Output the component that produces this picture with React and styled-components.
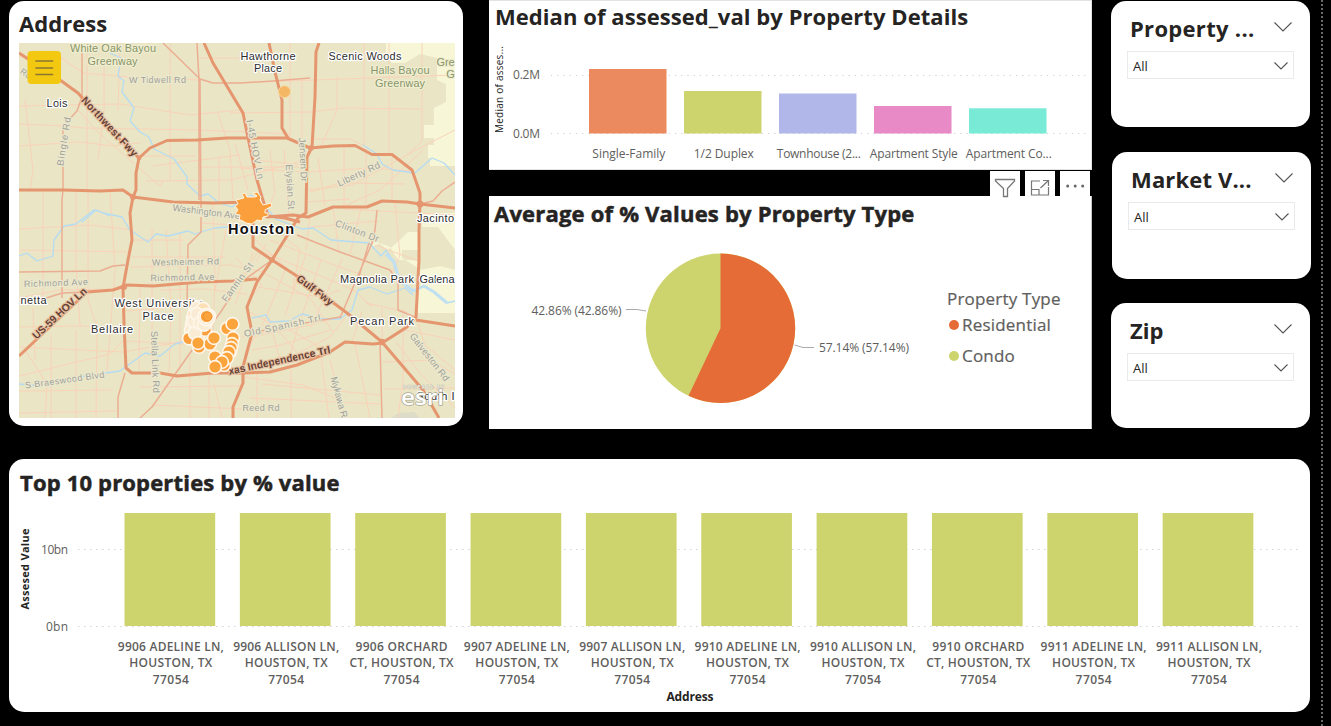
import React from "react";
import styled, { createGlobalStyle } from "styled-components";

const Global = createGlobalStyle`
  * { box-sizing: border-box; }
  body { margin: 0; background: #000; overflow: hidden; }
  svg { display: block; }
`;

const UI = '"Open Sans", "Noto Sans", sans-serif';

const Page = styled.div`
  display: flex;
  width: 1331px;
  height: 726px;
  background: #000;
  font-family: ${UI};
  color: #252423;
  overflow: hidden;
`;
const Report = styled.main`
  width: 1321px;
  flex: none;
  padding: 0 0 0 9px;
`;
const PageEdge = styled.div`
  width: 2px;
  background: repeating-linear-gradient(#6a6a6a 0 2px, #000 2px 4px);
`;
const TopRow = styled.div`
  display: flex;
  align-items: flex-start;
  height: 459px;
`;
const Card = styled.section`
  background: #fff;
  border-radius: 15px;
  overflow: hidden;
`;
const MapCard = styled(Card)`
  width: 454px;
  height: 425px;
  margin-top: 1px;
  padding: 7px 8px 8px 10px;
`;
const Title = styled.h2`
  margin: 0;
  font-size: 22px;
  line-height: 30px;
  height: ${(p) => p.$height || 32}px;
  font-weight: 700;
  white-space: nowrap;
  letter-spacing: ${(p) => p.$tracking || 0}px;
  -webkit-text-stroke: ${(p) => (p.$heavy ? "0.5px #252423" : "0")};
`;
const Middle = styled.div`
  width: 603px;
  margin-left: 26px;
`;
const Panel = styled.section`
  background: #fff;
  border-right: 1px solid #c8c8c8;
  height: ${(p) => p.$height}px;
  padding: ${(p) => p.$pad};
`;
const BarPanel = styled(Panel)`
  border: 1px solid #e3e3e3;
  border-left: 0;
`;
const Toolbar = styled.div`
  display: flex;
  justify-content: flex-end;
  gap: 5px;
  height: 26px;
  padding: 1px 2px 0 0;
`;
const ToolButton = styled.button`
  width: 30px;
  height: 27px;
  padding: 0;
  border: 0;
  background: #fff;
  position: relative;
`;
const PieBody = styled.div`
  display: flex;
`;
const Legend = styled.div`
  padding-top: 56px;
  margin-left: 7px;
  color: #605e5c;
  font-size: 17px;
  font-weight: 500;
  letter-spacing: 0.2px;
  -webkit-text-stroke: 0.2px #605e5c;
`;
const LegendTitle = styled.div`
  line-height: 26px;
  white-space: nowrap;
`;
const LegendItem = styled.div`
  display: flex;
  align-items: center;
  gap: 3px;
  line-height: 26px;
  margin: 0 0 5px 2px;
  &::before {
    content: "";
    width: 10px;
    height: 10px;
    border-radius: 50%;
    background: ${(p) => p.$color};
  }
`;
const Filters = styled.aside`
  margin-left: 19px;
  width: 201px;
`;
const FilterCard = styled(Card)`
  width: 199px;
  height: ${(p) => p.$height}px;
  margin: ${(p) => p.$margin};
  padding: 12px 16px;
`;
const FilterHead = styled.div`
  display: flex;
  justify-content: space-between;
  padding: 0 2px 0 3px;
  height: 38px;
`;
const Select = styled.div`
  display: flex;
  align-items: center;
  justify-content: space-between;
  height: 28px;
  border: 1px solid #eaeaea;
  padding: 2px 5px 0 5px;
  font-size: 13px;
`;
const BottomCard = styled(Card)`
  width: 1301px;
  height: 253px;
  padding: 8px 0 0 11px;
`;

function Chevron({ w, h, top = 0 }) {
  return (
    <svg width={w} height={h + top} viewBox={`0 ${-top} ${w} ${h + top}`}>
      <path d={`M.5 .5L${w / 2} ${h - 1}L${w - 0.5} .5`} fill="none" stroke="#555" strokeWidth="1.1" />
    </svg>
  );
}

function Filter({ title, tracking, height, margin }) {
  return (
    <FilterCard $height={height} $margin={margin}>
      <FilterHead>
        <Title $tracking={tracking}>{title}</Title>
        <Chevron w={18} h={10} top={9} />
      </FilterHead>
      <Select>
        <span>All</span>
        <Chevron w={14} h={8} />
      </Select>
    </FilterCard>
  );
}

const LIGHT = [
  "M19 57H60L83 73L130 77L200 80", "M19 106L120 104L190 115L240 110", "M19 124L65 126L84 128L200 130L290 134",
  "M19 146L80 142L113 146L140 143", "M25 100L33 170L30 190", "M87 43V190", "M104 60V110L98 160", "M120 43L118 110",
  "M170 43V180", "M78 110L100 134L160 186L164 180", "M136 156H196M152 166L240 155", "M146 181L230 180",
  "M218 113L230 150L233 200", "M219 157V203", "M200 58H270", "M200 167H310", "M290 43V138", "M302 77V138",
  "M337 77V110L321 146", "M364 43V145", "M389 43V155", "M422 43V141L407 155", "M230 83L455 75",
  "M230 113L310 112L343 108L422 109", "M310 139H350L365 146", "M423 150L380 190L340 208", "M230 180L250 175L305 160",
  "M455 130L420 148L352 185L307 190", "M240 168L306 172L370 168L412 171", "M344 146V208M366 146V207M392 155V203",
  "M310 192L340 183L405 184", "M306 202L350 199", "M318 158L325 206", "M270 150L275 193L265 214", "M284 150L289 216",
  "M254 160L305 165", "M235 143L248 190",
  "M19 229L90 225L133 230", "M88 190V300L98 330", "M110 191L115 270L107 371", "M76 190V265L80 325", "M43 190V298",
  "M19 250L130 252", "M19 298L60 290L125 289", "M19 327L80 326L124 328", "M19 347L123 352L186 341L230 330",
  "M51 335L51 418", "M76 330V418", "M97 322L96 418", "M25 350L47 384L45 418", "M19 376L110 354L124 340",
  "M19 391L113 390", "M19 413L117 411", "M33 308L35 360", "M132 240L184 240", "M130 267L230 265L264 272",
  "M132 257H225", "M152 229V373", "M166 230L171 310L169 373", "M140 286L139 370", "M180 232V370", "M213 203L215 280L211 373",
  "M226 230L215 290", "M194 213L242 220", "M201 223L250 226", "M125 311L190 306", "M125 341L185 344", "M160 290L205 289L247 294",
  "M140 387L240 386", "M152 405L245 409", "M190 355V418M209 375V418", "M214 383L222 418", "M244 377L303 385L340 400",
  "M257 373V418M291 370V418M321 356L329 418", "M262 384L380 395", "M250 398L382 404", "M330 360L345 418", "M355 344L370 418",
  "M382 362L430 360L455 374", "M384 389L455 388", "M396 342L420 373L455 408", "M417 320L425 345L455 370",
  "M383 343L405 330L455 340", "M252 337L310 325L340 317", "M242 337L286 328L325 350", "M252 350L281 345L330 330",
  "M263 252L354 290L372 307", "M270 240L334 265L389 284", "M258 287L320 297L340 290", "M264 273L310 298L333 332",
  "M250 312L270 323L280 360", "M268 318L300 356", "M285 270L265 320L245 353", "M306 254L285 315", "M321 260L298 327L287 367",
  "M342 259L311 327", "M345 318L330 337L300 352", "M362 311L352 342", "M382 308V342", "M403 309V380L398 418",
  "M366 303L407 312", "M375 245L418 261", "M250 235L300 280", "M236 258L262 285L247 302", "M253 252L235 305",
  "M260 249L242 276", "M266 244L256 262", "M278 232L300 250L293 288", "M310 217L306 250", "M333 207L339 252", "M361 208L350 254",
  "M311 227L378 221", "M343 209L455 215", "M395 203L400 255L390 278",
];
const MEDIUM = [
  "M82 43V97L77 111L63 126V190L62 200V298", "M163 43L200 79L213 83H240L273 81L310 78", "M197 43L199 80V200M200 80L201 210",
  "M201 217V232L188 245L187 307", "M19 272L100 271L113 266L125 265", "M40 300L62 293L90 292",
  "M272 260L240 283L220 313L190 353L152 407L140 418", "M125 373L118 397V418", "M297 235L317 243L340 252L390 270L398 282V310L417 318",
  "M372 243L340 318M369 243L357 283", "M377 210L375 230L372 243", "M380 343L382 418", "M455 182L442 191L433 201L420 204",
  "M252 333L270 329L340 317",
];
const MAJOR = [
  "M19 53L28 59L60 80L78 93L86 102L110 130L139 158L150 148L167 140.5L197 140L227 138H287L310 148L333 146L355 145.5L372 154.5H392L412 170L420 193V203L419 230L419 260L416 317L407 327L382 343L373 344L345 342L330 352L297 365L270 372L243 373L213 373L177 376L160 373H132L126 368L124 323L123 288L128 260L132 240L130 213L133 197L136 190V173L139 158",
  "M19 190H63L100 191L123 190L133 197L173 202L213 203L250 202L267 217L293 215L308 217L333 207H367L382 201L407 202L420 204L455 208",
  "M204 43L213 63L231 93L243 113L247 133L257 180L262 197L268 216",
  "M269 43L275 72L282 100V128L288 138", "M319 43L316 52L315 97L312 147L307 157L306 213L298 218L272 260L257 282L247 307L252 333L243 367V383L233 407V418",
  "M253 220V247L272 260L300 278L347 313L382 342L423 390L439 418", "M268 216L285 218L300 222",
  "M257 279L233 281L200 282L153 286L127 285L113 290L87 292L19 356", "M416 320L455 326",
];
const RIVERS = [
  "M110 53L121 58L118 76L124 81L122 92L134 108L130 121L140 132L149 137L154 149L174 159L187 177V184L200 196L208 194L219 203L232 207L251 195L262 203L276 219L302 229L313 228L331 240L369 243L381 256L386 250L394 262L399 280L413 291L424 286L434 292L447 303L455 301",
  "M19 256L27 253L37 261L53 256L54 240L64 226L76 224L94 210L108 214L122 217L130 230L148 242L156 234L168 236L188 231L195 234L214 228L240 226",
  "M82 222L96 210L110 216", "M19 384L40 386L85 376L120 371L145 353L160 356L175 344L190 340",
  "M252 318L266 315L270 322L289 321L302 314L323 319L340 319L352 310L358 290L370 287L387 294L405 288L413 295",
  "M363 145L377 154L382 164L393 170L415 173L432 158L444 163L455 175",
];

// x, y, text, width, size, tone, rotation
const LABELS = [
  [113, 52, "White Oak Bayou", 86, 11, "park", 0], [112.5, 64.5, "Greenway", 50, 11, "park", 0],
  [400, 74, "Halls Bayou", 59, 11, "park", 0], [400, 86.5, "Greenway", 50, 11, "park", 0],
  [445.5, 65.5, "Gre", 18, 11, "park", 0], [450.5, 77.5, "G", 8, 11, "park", 0],
  [157.5, 83, "W Tidwell Rd", 57, 9, "road", 0],
  [24, 76, "Rd", 11, 8.5, "road", 35], [67, 142, "Bingle Rd", 49, 9.5, "road", -81],
  [107, 129, "Northwest Fwy", 77, 10.5, "hwy", 47],
  [252, 150, "I-45 HOV Ln", 60, 9.5, "road", 79], [300, 160, "Jensen Dr", 44, 9.5, "road", 87],
  [287, 187, "Elysian St", 45, 9.5, "road", 87], [360, 177, "Liberty Rd", 46, 9.5, "road", -25],
  [206, 215, "Washington Ave", 68, 9.5, "road", 7], [356, 234, "Clinton Dr", 46, 9.5, "road", 21],
  [185.5, 265, "Westheimer Rd", 67, 9, "road", -1], [182.5, 280.5, "Richmond Ave", 64, 9, "road", -1],
  [56, 286, "Richmond Ave", 64, 9, "road", -2], [62, 316, "US-59 HOV Ln", 70, 10.5, "hwy", -43],
  [240, 284, "Fannin St", 46, 9.5, "road", -54], [313, 293, "Gulf Fwy", 43, 10.5, "hwy", 37],
  [283, 329, "Old Spanish Trl", 78, 9.5, "road", -12], [280, 364, "xas Independence Trl", 104, 10.5, "hwy", -12],
  [65, 383, "S Braeswood Blvd", 80, 9, "road", -8], [152, 362, "Stella Link Rd", 62, 9.5, "road", 88],
  [261, 411, "Reed Rd", 37, 9, "road", 0], [336, 398, "Mykawa R", 42, 9.5, "road", 75], [427, 359, "Galveston Rd", 58, 9.5, "road", 52],
  [57, 106.5, "Lois", 21, 11, "place", 0], [268, 60, "Hawthorne", 55, 11, "place", 0], [268, 72, "Place", 28, 11, "place", 0],
  [365, 60, "Scenic Woods", 73, 11, "place", 0], [435.5, 221.5, "Jacinto", 37, 11, "place", 0],
  [377, 282.5, "Magnolia Park", 74, 11, "place", 0], [437, 282.5, "Galena", 35, 11, "place", 0],
  [382, 325, "Pecan Park", 64, 11, "place", 0], [158, 306.5, "West University", 87, 11, "place", 0],
  [158, 319.5, "Place", 31, 11, "place", 0], [112, 332.5, "Bellaire", 42, 11, "place", 0],
  [33.5, 303.5, "netta", 26, 11, "place", 0], [435.5, 399.5, "South I", 38, 11, "place", 0],
];
const TONES = {
  park: { fill: "#87956a", halo: "#f0edd0", weight: 400 },
  road: { fill: "#9fa19b", halo: "#ece8cd", weight: 400 },
  hwy: { fill: "#664237", halo: "#e8c3a3", weight: 700 },
  place: { fill: "#2c2c2c", halo: "#fff", weight: 400 },
};
const DOTS = [
  [227, 328.5], [232.5, 324], [210, 344], [214, 338], [198, 343], [233, 338], [232, 344], [231, 348], [229, 352],
  [215, 357], [227, 358], [222, 362], [215, 367], [206.5, 316.5],
];
const RINGS = [
  [195, 312], [193, 318], [192, 324], [191, 330], [190, 338], [197, 308], [200, 314], [201, 320], [202, 325], [196, 330],
  [203, 309], [198, 336], [199, 346], [209, 316], [206, 322], [194, 315], [198, 324],
];

const MapLabel = styled.text`
  font-family: "Liberation Sans", Arial, sans-serif;
  text-anchor: middle;
  paint-order: stroke;
  stroke-width: 2.4px;
  stroke-linejoin: round;
  stroke: ${(p) => TONES[p.$tone].halo};
  fill: ${(p) => TONES[p.$tone].fill};
  font-weight: ${(p) => TONES[p.$tone].weight};
`;

function HoustonMap() {
  return (
    <svg width="436" height="375" viewBox="19 43 436 375" fill="none" strokeLinejoin="round">
      <rect x="19" y="43" width="436" height="375" fill="#e9e5c5" />
      <path fill="#f7f6d6" d="M386 43H455V166H443V166H430V158H428V145H434V138H424V125H434V108L446 102V84L437 80V58L420 54L405 63H391V57L386 54Z" />
      <path fill="#f7f6d6" d="M400 240L408 232H418V250H402V258L418 268V284L455 290V313H418V260H398L390 247L380 243L372 247L375 240L388 250ZM425 227H438L455 250V213H422V227M420 270L440 266L455 270V292L420 286Z" />
      <path fill="#dddcc8" d="M391 418L398 413L414 412L420 418Z" />
      <g stroke="#fad2b8" strokeWidth="1">{LIGHT.map((d) => <path key={d} d={d} />)}</g>
      <g stroke="#b5dcf3" strokeWidth="1.3">{RIVERS.map((d) => <path key={d} d={d} />)}</g>
      <path d="M386 254L394 262L399 280L413 291L424 286L434 292L447 303" stroke="#bfe0f2" strokeWidth="3" />
      <g stroke="#ecae92" strokeWidth="1.5">{MEDIUM.map((d) => <path key={d} d={d} />)}</g>
      <g stroke="#e5966f" strokeWidth="3">{MAJOR.map((d) => <path key={d} d={d} />)}</g>
      <g fill="#e5966f">
        <circle cx="133" cy="197" r="3" /><circle cx="139" cy="158" r="2.4" /><circle cx="124" cy="287" r="3" />
        <circle cx="272" cy="260" r="2.8" /><circle cx="382" cy="342" r="3.3" /><circle cx="420" cy="204" r="3.5" /><circle cx="311" cy="148" r="2.8" />
      </g>
      {LABELS.map(([x, y, text, len, size, tone, rot], i) => (
        <MapLabel key={i} $tone={tone} x={x} y={y} fontSize={size} textLength={len} transform={rot ? `rotate(${rot} ${x} ${y})` : undefined}>
          {text}
        </MapLabel>
      ))}
      <circle cx="284.5" cy="91.7" r="6" fill="#f4b763" stroke="#f6d9a5" />
      <path fill="#fa9f3c" stroke="#fff4e0" strokeWidth="1" d="M236 200L244 198L242 194L245 193L247 197L255 197L257 196L253 193L257 192L261 197L260 200L263 205L271 203L272 206L265 210V213H268V216L263 217L262 221L257 220L252 224L246 223L241 220L239 221L240 215L235 214L238 210L235 206L238 204Z" />
      <text x="261" y="234" textAnchor="middle" textLength="66" fontFamily="Liberation Sans, Arial, sans-serif" fontWeight="700" fontSize="14.5" fill="#111" stroke="#fff" strokeWidth="2.5" paintOrder="stroke">Houston</text>
      <g stroke="#fff6ea" strokeWidth="1.6">
        {RINGS.map(([x, y], i) => <circle key={i} cx={x} cy={y} r="6.6" fill={i < 10 ? "#faecd4" : "#fbdfb5"} />)}
        {[[189, 338.5], [199, 347], [205, 330], [230, 352], [224, 365]].map(([x, y]) => <circle key={x} cx={x} cy={y} r="6.4" fill="#fa9f3c" />)}
        {[[195, 333], [194, 321], [197, 314], [200, 323], [204, 324.5]].map(([x, y]) => <circle key={y} cx={x} cy={y} r="6.6" fill="#faecd4" />)}
        <circle cx="206.5" cy="317" r="8.6" fill="#faecd4" />
        {DOTS.map(([x, y]) => <circle key={`${x}-${y}`} cx={x} cy={y} r="6.4" fill="#fba43c" />)}
      </g>
      <circle cx="207.5" cy="316.5" r="4.5" stroke="#f08f2c" />
      <g fontFamily="Open Sans, sans-serif" fill="#fff" stroke="#a9a793" strokeWidth="1.4" paintOrder="stroke">
        <text x="403" y="389" fontSize="5" textLength="41" strokeWidth=".5">POWERED BY</text>
        <text x="401" y="405" fontSize="22" fontWeight="600" textLength="43" lengthAdjust="spacingAndGlyphs">esri</text>
      </g>
      <rect x="27.5" y="51" width="33.5" height="33" rx="4" fill="#f2c811" />
      <path d="M36 61H52.5M36 68H52.5M36 74.5H52.5" stroke="#8a7630" strokeWidth="1.7" strokeLinecap="round" />
    </svg>
  );
}

const ChartText = styled.text`
  font-family: ${UI};
  font-size: ${(p) => p.$size || 12}px;
  font-weight: ${(p) => p.$weight || 400};
  fill: ${(p) => p.$fill || "#605e5c"};
`;

const DETAILS = [
  ["Single-Family", 69, "#eb895f", 73], ["1/2 Duplex", 91, "#cdd46e", 60], ["Townhouse (2...", 93.5, "#b2b7ea", 84],
  ["Apartment Style", 106, "#e78ac5", 88], ["Apartment Co...", 108.3, "#79ead5", 86],
];
function DetailsChart() {
  return (
    <svg width="596" height="135" viewBox="495 34 596 135">
      <g stroke="#cfcfcf" strokeDasharray="1.2 5">
        <path d="M551 75.5H1088M551 133.5H1088" />
      </g>
      <ChartText $fill="#252423" $size={10} textLength="87" transform="translate(503 133) rotate(-90)">Median of asses...</ChartText>
      <ChartText x="513" y="79" textLength="27">0.2M</ChartText>
      <ChartText x="513" y="138" textLength="27">0.0M</ChartText>
      {DETAILS.map(([name, top, color, len], i) => (
        <g key={name}>
          <rect x={589 + 95 * i} y={top} width="77.5" height={133.5 - top} fill={color} />
          <ChartText x={628.8 + 95 * i} y="158" textAnchor="middle" textLength={len}>{name}</ChartText>
        </g>
      ))}
    </svg>
  );
}

function PieChart() {
  return (
    <svg width="446" height="199" viewBox="494 230 446 199">
      <circle cx="720.5" cy="328.3" r="74.7" fill="#cdd46e" />
      <path d="M720.5 328.3V253.6A74.7 74.7 0 1 1 688.5 395.8Z" fill="#e66c37" />
      <path d="M626 309.5H637L646 311M794.5 345L803 347.5H814" fill="none" stroke="#aaa" />
      <ChartText x="531.5" y="315" textLength="90">42.86% (42.86%)</ChartText>
      <ChartText x="819" y="352" textLength="90">57.14% (57.14%)</ChartText>
    </svg>
  );
}

const PROPERTIES = [
  ["9906 ADELINE LN,", "HOUSTON, TX"], ["9906 ALLISON LN,", "HOUSTON, TX"], ["9906 ORCHARD", "CT, HOUSTON, TX"],
  ["9907 ADELINE LN,", "HOUSTON, TX"], ["9907 ALLISON LN,", "HOUSTON, TX"], ["9910 ADELINE LN,", "HOUSTON, TX"],
  ["9910 ALLISON LN,", "HOUSTON, TX"], ["9910 ORCHARD", "CT, HOUSTON, TX"], ["9911 ADELINE LN,", "HOUSTON, TX"],
  ["9911 ALLISON LN,", "HOUSTON, TX"],
];
const LINE_WIDTH = { "HOUSTON, TX": 83, "CT, HOUSTON, TX": 104 };
function PropertiesChart() {
  return (
    <svg width="1290" height="212" viewBox="20 500 1290 212">
      <path d="M78 549.5H1300M78 626.5H1300" stroke="#d2d2d2" strokeDasharray="1.5 4.5" />
      <ChartText $fill="#252423" $size={11} $weight={700} textLength="81" transform="translate(29 609.5) rotate(-90)">Assesed Value</ChartText>
      <ChartText x="68" y="554" textAnchor="end" $weight={500} textLength="27">10bn</ChartText>
      <ChartText x="68" y="631" textAnchor="end" $weight={500} textLength="22">0bn</ChartText>
      {PROPERTIES.map(([a, b], i) => {
        const cx = 170 + 115.35 * i;
        return (
          <g key={a}>
            <rect x={cx - 45.5} y="513" width="90.7" height="113" fill="#cdd46e" />
            <ChartText $weight={600} x={cx + 0.8} y="651" textAnchor="middle" textLength={a.includes("ORCHARD") ? 92 : 106}>{a}</ChartText>
            <ChartText $weight={600} x={cx + 0.8} y="667" textAnchor="middle" textLength={LINE_WIDTH[b]}>{b}</ChartText>
            <ChartText $weight={600} x={cx + 0.8} y="684" textAnchor="middle" textLength="36">77054</ChartText>
          </g>
        );
      })}
      <ChartText $fill="#252423" $weight={700} x="690" y="701" textAnchor="middle" textLength="47">Address</ChartText>
    </svg>
  );
}

export default function App() {
  return (
    <Page>
      <Global />
      <Report>
        <TopRow>
          <MapCard>
            <Title $height={35} $tracking={0.05}>Address</Title>
            <HoustonMap />
          </MapCard>
          <Middle>
            <BarPanel $height={170} $pad="0 0 0 6px">
              <Title $height={33} $tracking={0.06}>Median of assessed_val by Property Details</Title>
              <DetailsChart />
            </BarPanel>
            <Toolbar>
              <ToolButton aria-label="Filters">
                <svg width="30" height="27" viewBox="0 0 30 27" fill="none" stroke="#777" strokeWidth="1.3">
                  <path d="M5.5 8.5H24.5V10L17.5 17.5V25.5H13.5V17.5L5.5 10Z" />
                </svg>
              </ToolButton>
              <ToolButton aria-label="Focus mode">
                <svg width="30" height="27" viewBox="0 0 30 27" fill="none" stroke="#777" strokeWidth="1.2">
                  <path d="M15 10H6.5V24H23.5V16M6.5 18.5H14V24M18 9.5H23.5V15M23.5 9.5L15.5 17" />
                </svg>
              </ToolButton>
              <ToolButton aria-label="More options">
                <svg width="30" height="27" viewBox="0 0 30 27" fill="#666">
                  <circle cx="7.7" cy="15" r="1.5" /><circle cx="15.2" cy="15" r="1.5" /><circle cx="22.7" cy="15" r="1.5" />
                </svg>
              </ToolButton>
            </Toolbar>
            <Panel $height={233} $pad="2px 0 0 5px">
              <Title $height={32} $heavy $tracking={0.2}>Average of % Values by Property Type</Title>
              <PieBody>
                <PieChart />
                <Legend>
                  <LegendTitle>Property Type</LegendTitle>
                  <LegendItem $color="#e66c37">Residential</LegendItem>
                  <LegendItem $color="#cdd46e">Condo</LegendItem>
                </Legend>
              </PieBody>
            </Panel>
          </Middle>
          <Filters>
            <Filter title="Property ..." tracking={0.3} height={126} margin="1px 0 0 0" />
            <Filter title="Market V..." tracking={0.15} height={127} margin="25px 0 0 1px" />
            <Filter title="Zip" height={125} margin="24px 0 0 0" />
          </Filters>
        </TopRow>
        <BottomCard>
          <Title $height={33} $heavy $tracking={0.17}>Top 10 properties by % value</Title>
          <PropertiesChart />
        </BottomCard>
      </Report>
      <PageEdge />
    </Page>
  );
}
